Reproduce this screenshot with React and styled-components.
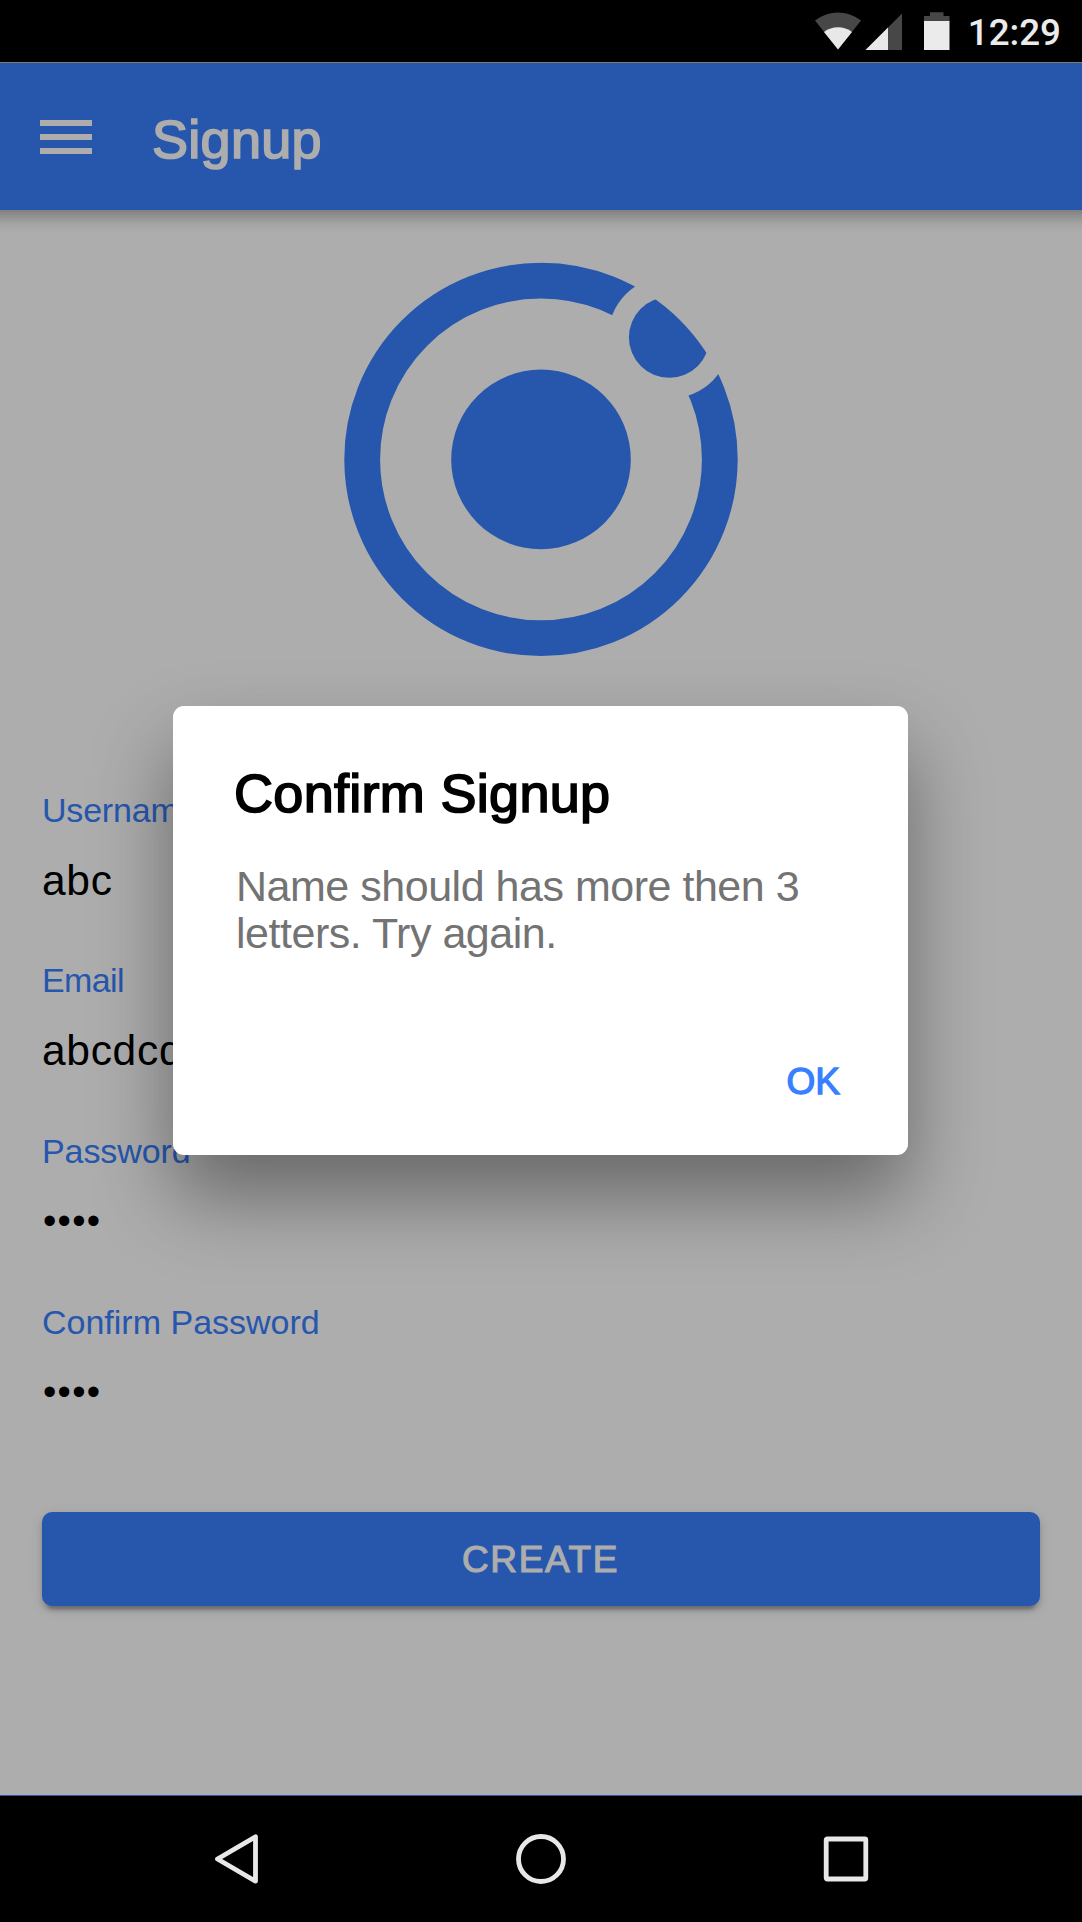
import React from "react";
import styled, { createGlobalStyle } from "styled-components";

const GlobalStyle = createGlobalStyle`
  *, *::before, *::after { box-sizing: border-box; }
  body {
    margin: 0;
    background: #000;
    font-family: "Liberation Sans", Arial, sans-serif;
  }
`;

const Screen = styled.div`
  display: flex;
  flex-direction: column;
  width: 1082px;
  height: 1922px;
  overflow: hidden;
  background: #000;
`;

const StatusBar = styled.div`
  display: flex;
  justify-content: flex-end;
  flex: none;
  height: 62px;
  padding-right: 21px;
`;

const StatusIcons = styled.svg`
  flex: none;
  width: 140px;
  height: 62px;
  margin-right: 15px;
`;

const Clock = styled.time`
  width: 94px;
  text-align: right;
  white-space: nowrap;
  font-family: Roboto, sans-serif;
  font-size: 36.75px;
  font-weight: 500;
  line-height: 44px;
  padding-top: 11px;
  color: #ebebeb;
`;

const Page = styled.div`
  position: relative;
  display: flex;
  flex-direction: column;
  flex: 1;
  overflow: hidden;
  background: #fff;
  border-top: 1px solid #7b7b7b;
  border-bottom: 1px solid #2657ad;
`;

const Toolbar = styled.header`
  display: flex;
  align-items: center;
  flex: none;
  height: 147px;
  padding: 0 40px;
  gap: 60px;
  background: #3880ff;
`;

const MenuButton = styled.button`
  display: flex;
  flex-direction: column;
  justify-content: space-between;
  width: 52px;
  height: 34px;
  padding: 0;
  border: 0;
  background: none;
`;

const MenuLine = styled.span`
  height: 6px;
  background: #fff;
`;

const Title = styled.h1`
  margin: 4px 0 0;
  font-size: 54px;
  line-height: 60px;
  font-weight: 400;
  letter-spacing: 0.3px;
  color: #fff;
  -webkit-text-stroke: 1.7px currentColor;
`;

const Content = styled.main`
  display: flex;
  flex-direction: column;
  flex: 1;
  padding: 52px 42px 0;
  background: linear-gradient(
    rgba(0, 0, 0, 0.26) 0,
    rgba(0, 0, 0, 0.15) 7px,
    rgba(0, 0, 0, 0.05) 14px,
    rgba(0, 0, 0, 0) 22px
  );
`;

const Logo = styled.svg`
  align-self: center;
  flex: none;
  width: 394px;
  height: 394px;
  margin-bottom: 133.7px;
  overflow: visible;
  fill: #3880ff;
`;

const Field = styled.label`
  display: flex;
  flex-direction: column;
  flex: none;
  gap: ${({ $masked }) => ($masked ? 26 : 27)}px;
  height: 170.67px;
`;

const FieldLabel = styled.span`
  font-size: 34px;
  line-height: 40px;
  letter-spacing: ${({ $tracking = 0 }) => $tracking}px;
  color: #3880ff;
`;

const FieldValue = styled.span`
  padding-left: ${({ $masked }) => ($masked ? 1 : 0)}px;
  font-size: ${({ $masked }) => ($masked ? 38 : 42.5)}px;
  line-height: 48px;
  letter-spacing: ${({ $masked }) => ($masked ? 1.3 : 0.7)}px;
  color: #000;
`;

const CreateButton = styled.button`
  flex: none;
  height: 94.5px;
  margin-top: 39.6px;
  padding: 2px 1px 0 0;
  border: 0;
  border-radius: 10px;
  background: #3880ff;
  color: #fff;
  font-family: inherit;
  font-size: 37px;
  letter-spacing: 1.6px;
  -webkit-text-stroke: 1.1px currentColor;
  box-shadow: 0 8px 3px -5px rgba(0, 0, 0, 0.2),
    0 5px 5px 0 rgba(0, 0, 0, 0.14), 0 3px 13px 0 rgba(0, 0, 0, 0.12);
`;

const Backdrop = styled.div`
  position: absolute;
  inset: 0;
  display: flex;
  align-items: center;
  justify-content: center;
  background: rgba(0, 0, 0, 0.32);
`;

const Dialog = styled.section`
  display: flex;
  flex-direction: column;
  width: 735px;
  height: 449px;
  margin: 2px 1px 0 0;
  padding: 57px 63px 0 61px;
  border-radius: 11px;
  background: #fff;
  box-shadow: 0 42px 80px rgba(0, 0, 0, 0.4);
`;

const DialogTitle = styled.h2`
  margin: 0;
  font-size: 54px;
  line-height: 60px;
  font-weight: 400;
  letter-spacing: 0.3px;
  color: #000;
  -webkit-text-stroke: 1.7px currentColor;
`;

const DialogText = styled.p`
  margin: 40px 0 0 2px;
  font-size: 43px;
  line-height: 47px;
  letter-spacing: -0.48px;
  white-space: nowrap;
  color: #737373;
`;

const DialogAction = styled.button`
  align-self: flex-end;
  margin: 104px 5px 0 0;
  padding: 0;
  border: 0;
  background: none;
  font-family: inherit;
  font-size: 37px;
  line-height: 42px;
  color: #3880ff;
  -webkit-text-stroke: 1.3px currentColor;
`;

const NavBar = styled.nav`
  display: flex;
  justify-content: space-between;
  align-items: center;
  flex: none;
  height: 126px;
  padding: 0 211px;
`;

const NavIcon = styled.svg`
  width: 50px;
  height: 54px;
  fill: none;
  stroke: #e8e8e8;
  stroke-width: 4.8;
  stroke-linejoin: round;
`;

const fields = [
  { label: "Username", value: "abc", tracking: -0.2 },
  { label: "Email", value: "abcdcd", tracking: -0.6 },
  { label: "Password", value: "••••", masked: true, tracking: -0.1 },
  { label: "Confirm Password", value: "••••", masked: true },
];

export default function App() {
  return (
    <>
      <GlobalStyle />
      <Screen>
        <StatusBar>
          <StatusIcons viewBox="812 0 140 62">
            <path d="M815 20.5C829 9.8 847 9.8 861 20.5L838 49.5Z" fill="#474747" />
            <path d="M824 32C832 25.8 844 25.8 852 32L838 49.5Z" fill="#e8e8e8" />
            <path d="M865.5 50H902V13.5Z" fill="#474747" />
            <path d="M865.5 50H888V27.5Z" fill="#e8e8e8" />
            <path d="M924 16H930V12.3H943.5V16H949.5V22H924Z" fill="#474747" />
            <rect x="924" y="21" width="25.5" height="29" fill="#ebebeb" />
          </StatusIcons>
          <Clock>12:29</Clock>
        </StatusBar>

        <Page>
          <Toolbar>
            <MenuButton aria-label="Menu">
              <MenuLine />
              <MenuLine />
              <MenuLine />
            </MenuButton>
            <Title>Signup</Title>
          </Toolbar>

          <Content>
            <Logo viewBox="-197 -197.4 394 394">
              <defs>
                <mask id="ring">
                  <rect x="-197" y="-197" width="394" height="394" fill="#fff" />
                  <circle cx="128.3" cy="-122" r="61.3" fill="#000" />
                </mask>
                <clipPath id="disc">
                  <circle r="196.7" />
                </clipPath>
              </defs>
              <circle r="178.8" fill="none" stroke="#3880ff" strokeWidth="35.8" mask="url(#ring)" />
              <circle r="89.8" />
              <circle cx="128.3" cy="-122" r="40.4" clipPath="url(#disc)" />
            </Logo>
            {fields.map(({ label, value, masked, tracking }) => (
              <Field key={label} $masked={masked}>
                <FieldLabel $tracking={tracking}>{label}</FieldLabel>
                <FieldValue $masked={masked}>{value}</FieldValue>
              </Field>
            ))}
            <CreateButton>CREATE</CreateButton>
          </Content>

          <Backdrop>
            <Dialog role="dialog">
              <DialogTitle>Confirm Signup</DialogTitle>
              <DialogText>
                Name should has more then 3
                <br />
                letters. Try again.
              </DialogText>
              <DialogAction>OK</DialogAction>
            </Dialog>
          </Backdrop>
        </Page>

        <NavBar>
          <NavIcon viewBox="0 0 50 54">
            <path d="M6.5 27L44.5 4.8V49.2Z" />
          </NavIcon>
          <NavIcon viewBox="0 0 50 54">
            <circle cx="25" cy="27" r="22.5" />
          </NavIcon>
          <NavIcon viewBox="0 0 50 54">
            <rect x="5.2" y="7" width="39.6" height="40" rx="1" />
          </NavIcon>
        </NavBar>
      </Screen>
    </>
  );
}
